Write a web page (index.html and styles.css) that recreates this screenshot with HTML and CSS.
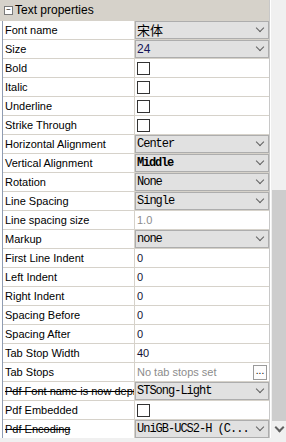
FILE: index.html
```html
<!DOCTYPE html>
<html lang="en">
<head>
    <meta charset="UTF-8">
    <title>Text properties</title>
    <link rel="stylesheet" href="styles.css">
</head>
<body>
    <div class="frame">
        <div class="grid">
            <div class="group">
                <span class="toggle">&minus;</span>
                <span>Text properties</span>
            </div>

            <div class="row"><div class="name">Font name</div><div class="val"><div class="combo cjk">宋体<span class="arrow"></span></div></div></div>
            <div class="row"><div class="name">Size</div><div class="val"><div class="combo blue">24<span class="arrow"></span></div></div></div>
            <div class="row"><div class="name">Bold</div><div class="val"><span class="check"></span></div></div>
            <div class="row"><div class="name">Italic</div><div class="val"><span class="check"></span></div></div>
            <div class="row"><div class="name">Underline</div><div class="val"><span class="check"></span></div></div>
            <div class="row"><div class="name">Strike Through</div><div class="val"><span class="check"></span></div></div>
            <div class="row"><div class="name">Horizontal Alignment</div><div class="val"><div class="combo mono">Center<span class="arrow"></span></div></div></div>
            <div class="row"><div class="name">Vertical Alignment</div><div class="val"><div class="combo mono bold">Middle<span class="arrow"></span></div></div></div>
            <div class="row"><div class="name">Rotation</div><div class="val"><div class="combo mono">None<span class="arrow"></span></div></div></div>
            <div class="row"><div class="name">Line Spacing</div><div class="val"><div class="combo mono">Single<span class="arrow"></span></div></div></div>
            <div class="row"><div class="name">Line spacing size</div><div class="val text muted">1.0</div></div>
            <div class="row"><div class="name">Markup</div><div class="val"><div class="combo mono">none<span class="arrow"></span></div></div></div>
            <div class="row"><div class="name">First Line Indent</div><div class="val text">0</div></div>
            <div class="row"><div class="name">Left Indent</div><div class="val text">0</div></div>
            <div class="row"><div class="name">Right Indent</div><div class="val text">0</div></div>
            <div class="row"><div class="name">Spacing Before</div><div class="val text">0</div></div>
            <div class="row"><div class="name">Spacing After</div><div class="val text">0</div></div>
            <div class="row"><div class="name">Tab Stop Width</div><div class="val text">40</div></div>
            <div class="row"><div class="name">Tab Stops</div><div class="val text muted"><span class="fill">No tab stops set</span><span class="dots">...</span></div></div>
            <div class="row"><div class="name struck">Pdf Font name is now depr</div><div class="val"><div class="combo mono">STSong-Light<span class="arrow"></span></div></div></div>
            <div class="row"><div class="name">Pdf Embedded</div><div class="val"><span class="check"></span></div></div>
            <div class="row"><div class="name struck">Pdf Encoding</div><div class="val"><div class="combo mono">UniGB-UCS2-H (C...<span class="arrow"></span></div></div></div>
        </div>
        <div class="scroll">
            <div class="track"><div class="thumb"></div></div>
            <div class="down"><span class="arrow dark"></span></div>
        </div>
    </div>
    <div class="footer"></div>
</body>
</html>
```

FILE: styles.css
```css
body {
    margin: 0;
    background: #ffffff;
    font-family: Arial, "Liberation Sans", sans-serif;
    font-size: 11px;
    color: #000000;
}
.frame {
    display: flex;
    height: 438px;
    overflow: hidden;
}
.grid {
    flex: none;
    width: 266px;
    margin-left: 2px;
    border-left: 1px solid #8f9cb2;
    border-right: 1px solid #c8c8c8;
}
.group {
    display: flex;
    align-items: center;
    gap: 2px;
    height: 20px;
    margin-left: -3px;
    padding-left: 4px;
    background: #d6d2ca;
    font-size: 12px;
    border-bottom: 1px solid #d6d2ca;
}
.toggle {
    width: 7px;
    height: 7px;
    border: 1px solid #7a7a7a;
    background: #ffffff;
    font-size: 8px;
    line-height: 6px;
    text-align: center;
}
.row {
    display: flex;
    height: 18px;
    border-bottom: 1px solid #d6d2ca;
}
.name {
    flex: none;
    width: 129px;
    padding-left: 2px;
    line-height: 18px;
    border-right: 1px solid #d6d2ca;
    white-space: nowrap;
    overflow: hidden;
}
.struck {
    text-decoration: line-through;
}
.val {
    flex: 1;
    display: flex;
    align-items: center;
    min-width: 0;
}
.text {
    padding-left: 2px;
    color: #111133;
}
.muted {
    color: #8c8c8c;
}
.fill {
    flex: 1;
}
.dots {
    width: 12px;
    height: 13px;
    margin-right: 2px;
    border: 1px solid #9a9a9a;
    background: #fdfdfd;
    color: #000000;
    font-size: 10px;
    line-height: 9px;
    text-align: center;
}
.combo {
    flex: 1;
    display: flex;
    align-items: center;
    height: 16px;
    margin-top: -1px;
    padding-left: 1px;
    background: #e1e1e1;
    border: 1px solid #adadad;
    white-space: nowrap;
    overflow: hidden;
}
.mono {
    font-family: "Liberation Mono", "Noto Sans CJK SC", monospace;
    font-size: 12px;
    letter-spacing: -1px;
}
.bold {
    font-weight: bold;
    letter-spacing: -1.2px;
}
.cjk {
    font-family: "Noto Sans CJK SC", sans-serif;
    font-size: 13px;
}
.blue {
    font-size: 12px;
    color: #16165a;
}
.arrow {
    flex: none;
    width: 5px;
    height: 5px;
    margin-left: auto;
    margin-right: 5px;
    border-right: 1px solid #606060;
    border-bottom: 1px solid #606060;
    transform: translateY(-2px) rotate(45deg);
}
.arrow.dark {
    margin: 0;
    border-width: 2px;
}
.check {
    width: 11px;
    height: 11px;
    margin-left: 2px;
    border: 1px solid #333333;
    background: #ffffff;
}
.scroll {
    flex: none;
    display: flex;
    flex-direction: column;
    width: 17px;
    margin-left: 1px;
    background: #f0f0f0;
}
.track {
    flex: 1;
    padding: 190px 1px 0 1px;
}
.thumb {
    height: 100%;
    background: #cdcdcd;
}
.down {
    display: flex;
    align-items: center;
    justify-content: center;
    height: 17px;
}
.footer {
    height: 4px;
    background: #f0f0f0;
}
```
